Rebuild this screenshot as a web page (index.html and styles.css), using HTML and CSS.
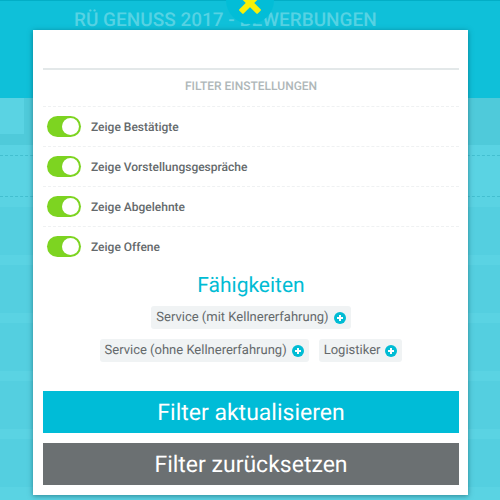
FILE: index.html
```html
<!DOCTYPE html>
<html lang="de">
<head>
    <meta charset="UTF-8">
    <meta name="viewport" content="width=device-width, initial-scale=1.0">
    <title>RÜ Genuss 2017 - Bewerbungen</title>
    <link rel="stylesheet" href="styles.css">
</head>
<body>

    <!-- Seite hinter dem Dialog -->
    <div class="page">
        <header class="page-header">
            <h1>RÜ GENUSS 2017 - BEWERBUNGEN</h1>
        </header>
        <div class="page-search"><div class="page-search-box"></div></div>
        <div class="page-line"></div>
        <div class="page-line page-line-second"></div>
        <div class="page-list">
            <div class="page-card"></div>
            <div class="page-card"></div>
            <div class="page-card"></div>
            <div class="page-card"></div>
            <div class="page-card"></div>
        </div>
    </div>

    <!-- Filter Dialog -->
    <button class="close-btn" type="button" aria-label="Schließen">
        <svg width="24" height="24" viewBox="0 0 24 24" fill="#f8f008">
            <g transform="rotate(45 12 10)">
                <rect x="-1" y="7" width="26" height="6" rx="1"/>
                <rect x="9" y="-3" width="6" height="26" rx="1"/>
            </g>
        </svg>
    </button>

    <form class="dialog">
        <input class="search" type="text" aria-label="Suche">
        <h2 class="subtitle">FILTER EINSTELLUNGEN</h2>

        <div class="options">
            <label class="option"><input class="switch" type="checkbox" checked>Zeige Bestätigte</label>
            <label class="option"><input class="switch" type="checkbox" checked>Zeige Vorstellungsgespräche</label>
            <label class="option"><input class="switch" type="checkbox" checked>Zeige Abgelehnte</label>
            <label class="option"><input class="switch" type="checkbox" checked>Zeige Offene</label>
        </div>

        <h3 class="skills-title">Fähigkeiten</h3>
        <div class="skills">
            <button class="skill" type="button">Service (mit Kellnererfahrung)
                <svg class="plus" viewBox="0 0 12 12"><circle cx="6" cy="6" r="6"/><path d="M6 3V9M3 6H9"/></svg>
            </button>
            <button class="skill" type="button">Service (ohne Kellnererfahrung)
                <svg class="plus" viewBox="0 0 12 12"><circle cx="6" cy="6" r="6"/><path d="M6 3V9M3 6H9"/></svg>
            </button>
            <button class="skill" type="button">Logistiker
                <svg class="plus" viewBox="0 0 12 12"><circle cx="6" cy="6" r="6"/><path d="M6 3V9M3 6H9"/></svg>
            </button>
        </div>

        <button class="btn" type="submit">Filter aktualisieren</button>
        <button class="btn btn-reset" type="reset">Filter zurücksetzen</button>
    </form>

</body>
</html>
```

FILE: styles.css
```css
* {
    box-sizing: border-box;
}

body {
    font-family: Roboto, sans-serif;
    text-rendering: geometricPrecision;
    background-color: #5ad3e3;
    color: #64696b;
    margin: 0;
    position: relative;
    min-height: 100vh;
    overflow: hidden;
}

button, input {
    font-family: inherit;
    text-rendering: inherit;
    color: inherit;
    border: none;
    margin: 0;
}

/* Hintergrund */
.page-header {
    height: 98px;
    padding: 8px 74px;
    border-top: 1px solid #02aec6;
    background-color: #0fc0d9;
}

.page-header h1 {
    margin: 0;
    font-size: 19px;
    line-height: 22px;
    font-weight: 500;
    color: #56d2e3;
    white-space: nowrap;
}

.page-search {
    height: 47px;
    background-color: #4fcada;
}

.page-search-box {
    width: 24px;
    height: 36px;
    background-color: #5ad3e3;
}

.page-line {
    height: 11px;
    border-bottom: 1px dashed #43bfd0;
}

.page-line-second {
    height: 41px;
}

.page-list {
    display: grid;
    gap: 10px;
    padding-top: 10px;
}

.page-card {
    height: 48px;
    background-color: #54cfe0;
}

/* Dialog */
.close-btn {
    position: absolute;
    top: -24px;
    left: 50%;
    width: 48px;
    height: 48px;
    margin-left: -24px;
    padding: 17px 12px 7px;
    border-radius: 50%;
    background-color: #02bdd7;
    cursor: pointer;
}

.close-btn svg {
    display: block;
}

.dialog {
    position: absolute;
    top: 30px;
    left: 33px;
    right: 32px;
    padding: 0 9px 10px 10px;
    background-color: white;
    box-shadow: 0 1px 5px rgba(0, 60, 70, 0.5);
}

.search {
    display: block;
    width: 100%;
    height: 40px;
    padding: 8px;
    border-bottom: 2px solid #e3e8e9;
    border-radius: 0;
    background-color: white;
    font-size: 16px;
    outline: none;
}

.subtitle {
    margin: 0;
    padding: 6px 0 9px;
    font-size: 12px;
    line-height: 21px;
    font-weight: 500;
    text-align: center;
    color: #afb7b9;
}

.option {
    display: flex;
    align-items: center;
    gap: 10px;
    height: 40px;
    padding-left: 4px;
    border-top: 1px dashed #eff1f2;
    font-size: 12px;
    font-weight: 500;
    cursor: pointer;
}

.switch {
    appearance: none;
    display: flex;
    justify-content: flex-end;
    width: 34px;
    height: 21px;
    padding: 2px;
    border-radius: 11px;
    background-color: #7dd421;
}

.switch::before {
    content: "";
    width: 17px;
    height: 17px;
    border-radius: 50%;
    background-color: white;
}

.switch:not(:checked) {
    justify-content: flex-start;
    background-color: #ccc;
}

.skills-title {
    margin: 7px 0;
    font-size: 21px;
    line-height: 26px;
    font-weight: 400;
    text-align: center;
    color: #00bcd4;
}

.skills {
    display: flex;
    flex-wrap: wrap;
    justify-content: center;
    gap: 10px;
    padding: 0 50px;
    margin-bottom: 29px;
}

.skill {
    display: flex;
    align-items: center;
    gap: 5px;
    height: 23px;
    padding: 0 5px;
    border-radius: 3px;
    background-color: #f0f3f4;
    font-size: 13px;
    cursor: pointer;
}

.plus {
    width: 12px;
    height: 12px;
    fill: #00bcd4;
    stroke: white;
    stroke-width: 2;
}

.plus circle {
    stroke: none;
}

.btn {
    display: block;
    width: 100%;
    height: 42px;
    padding: 0;
    background-color: #00bcd7;
    color: white;
    font-size: 23px;
    cursor: pointer;
}

.btn-reset {
    margin-top: 10px;
    background-color: #6b7072;
}
```
